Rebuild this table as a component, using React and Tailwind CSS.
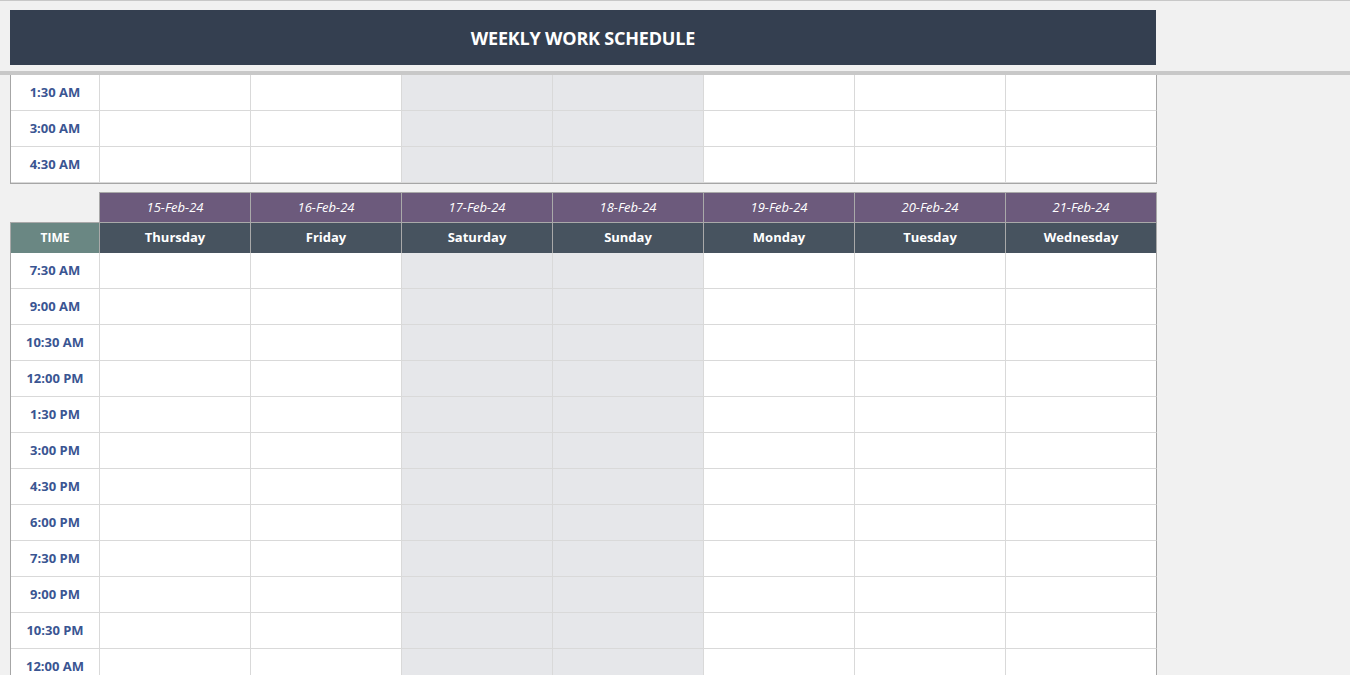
import React from "react";

const DAYS = [
  { date: "15-Feb-24", name: "Thursday" },
  { date: "16-Feb-24", name: "Friday" },
  { date: "17-Feb-24", name: "Saturday", weekend: true },
  { date: "18-Feb-24", name: "Sunday", weekend: true },
  { date: "19-Feb-24", name: "Monday" },
  { date: "20-Feb-24", name: "Tuesday" },
  { date: "21-Feb-24", name: "Wednesday" },
];

const TOP_TIMES = ["1:30 AM", "3:00 AM", "4:30 AM"];
const TIMES = [
  "7:30 AM",
  "9:00 AM",
  "10:30 AM",
  "12:00 PM",
  "1:30 PM",
  "3:00 PM",
  "4:30 PM",
  "6:00 PM",
  "7:30 PM",
  "9:00 PM",
  "10:30 PM",
  "12:00 AM",
];

const GRID = "grid grid-cols-[89px_repeat(7,151px)]";
const HEAD_GRID = "grid grid-cols-[89px_repeat(6,151px)_152px]";

function TimeRow({ time }) {
  return (
    <>
      <div className="flex h-[36px] items-center justify-center border-b border-r border-[#d9d9d9] bg-white text-[13px] font-bold text-[#3a5592]">
        {time}
      </div>
      {DAYS.map((d, i) => (
        <div
          key={d.name}
          className={`h-[36px] border-b border-[#d9d9d9] ${
            i === DAYS.length - 1 ? "border-r border-r-[#a6a6a6]" : "border-r"
          } ${d.weekend ? "bg-[#e6e7ea]" : "bg-white"}`}
        />
      ))}
    </>
  );
}

export default function App() {
  return (
    <div
      className="h-[675px] w-[1350px] overflow-hidden border-t border-[#c8c8c8] bg-[#f1f1f1]"
      style={{ fontFamily: '"Open Sans", "Noto Sans", sans-serif' }}
    >
      {/* title */}
      <div className="ml-[10px] mt-[9px] flex h-[55px] w-[1146px] items-center justify-center bg-[#343f50] pt-[2px] text-[18px] font-bold tracking-[-0.2px] text-white">
        WEEKLY WORK SCHEDULE
      </div>

      {/* frozen pane split */}
      <div className="mt-[6px] h-[4px] w-full bg-[#c8c8c8]" />

      {/* rows above the split */}
      <div className={`${GRID} ml-[10px] w-[1147px] border-l border-[#a6a6a6]`}>
        {TOP_TIMES.map((t) => (
          <TimeRow key={t} time={t} />
        ))}
      </div>
      <div className="ml-[10px] h-px w-[1147px] bg-[#a6a6a6]" />

      {/* week table */}
      <div className="ml-[10px] mt-[8px] w-[1147px]">
        <div className={HEAD_GRID}>
          <div className="h-[30px]" />
          {DAYS.map((d, i) => (
            <div
              key={d.date}
              className={`flex h-[30px] items-center justify-center border-l border-t border-[#a9a9a9] bg-[#6c5a7c] text-[13px] italic text-white ${
                i === DAYS.length - 1 ? "border-r" : ""
              }`}
            >
              {d.date}
            </div>
          ))}
          <div className="flex h-[31px] items-center justify-center border-l border-t border-[#a9a9a9] bg-[#6a8783] text-[12px] font-bold text-white">
            TIME
          </div>
          {DAYS.map((d, i) => (
            <div
              key={d.name}
              className={`flex h-[31px] items-center justify-center border-l border-t border-[#a9a9a9] bg-[#47535f] text-[13px] font-bold text-white ${
                i === DAYS.length - 1 ? "border-r" : ""
              }`}
            >
              {d.name}
            </div>
          ))}
        </div>
        <div className={`${GRID} border-l border-[#a6a6a6]`}>
          {TIMES.map((t) => (
            <TimeRow key={t} time={t} />
          ))}
        </div>
      </div>
    </div>
  );
}
